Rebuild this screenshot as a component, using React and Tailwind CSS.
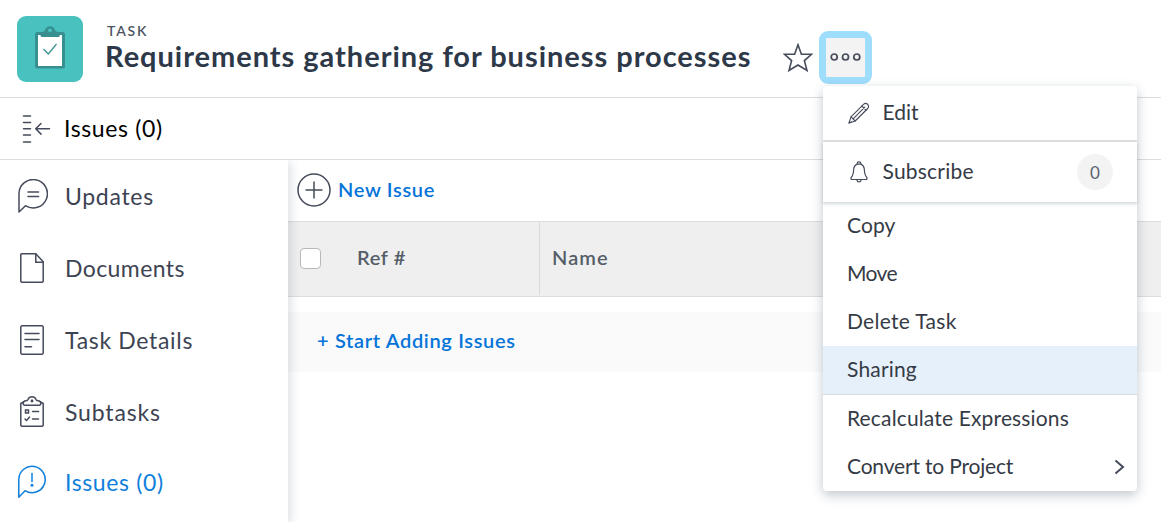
const ink = "#454b5a";

function Icon({ w, h, className = "", children, stroke = ink, sw = 1.5 }) {
  return (
    <svg
      width={w}
      height={h}
      viewBox={`0 0 ${w} ${h}`}
      fill="none"
      stroke={stroke}
      strokeWidth={sw}
      strokeLinecap="round"
      strokeLinejoin="round"
      className={"shrink-0 " + className}
    >
      {children}
    </svg>
  );
}

const TaskBadge = () => (
  <div className="mt-4 flex h-[66px] w-[66px] shrink-0 items-center justify-center rounded-[9px] bg-[#48c1bf]">
    <svg width="66" height="66" viewBox="0 0 66 66" fill="none">
      <rect x="18" y="16" width="30" height="36.500" rx="2.5" fill="#378f8f" />
      <rect x="21" y="19" width="24" height="31" fill="#fff" />
      <path d="M23.500 17.500C24 15.500 26.500 15.800 27.600 15C28.500 8.700 37.500 8.700 38.400 15C39.500 15.800 42 15.500 42.800 17.500V19.500Q42.800 21 41 21H25.500Q23.500 21 23.500 19.500Z" fill="#378f8f" />
      <circle cx="33" cy="14.300" r="1.900" fill="#48c1bf" />
      <path d="M26.500 33L31.300 38L39.500 28" stroke="#378f8f" strokeWidth="1.200" />
    </svg>
  </div>
);

const UpdatesIcon = () => (
  <Icon w={30} h={34}>
    <path d="M1 33V15A14.200 14.200 0 1 1 7.500 26.700Z" />
    <path d="M10 13H20.500M10 17.500H20.500" />
  </Icon>
);
const DocumentIcon = () => (
  <Icon w={24} h={30}>
    <path d="M1.500 .8H15.800L23.200 8.800V28Q23.200 29.200 22 29.200H2Q.8 29.200 .8 28V1.500Q.8 .8 1.500 .8Z" />
    <path d="M15.800 1V9.300H23" strokeLinejoin="miter" />
  </Icon>
);
const DetailsIcon = () => (
  <Icon w={24} h={30}>
    <rect x=".8" y=".8" width="22.400" height="28.400" rx="1.500" />
    <path d="M5 8.500H19M5 14.500H19M5 21.700H11.500" />
  </Icon>
);
const SubtasksIcon = () => (
  <Icon w={24} h={31}>
    <path d="M3.500 5.800L.8 7.500V29Q.8 30.200 2 30.200H22Q23.200 30.200 23.200 29V7.500L20.500 5.800" />
    <path d="M3.200 7.300Q3.200 5 6 4.800Q7.500 4.700 8 3.500Q9 .8 12 .8T16 3.500Q16.500 4.700 18 4.800Q20.800 5 20.800 7.300Q20.800 9.300 19 9.300H5Q3.200 9.300 3.200 7.300Z" />
    <circle cx="12" cy="5" r=".7" fill={ink} />
    <rect x="5.500" y="14" width="3" height="3" strokeLinejoin="miter" />
    <path d="M12.500 15.500H18.500M12.500 23H18.500M5 23L6.500 24.500L9.500 21" />
  </Icon>
);
const IssuesIcon = () => (
  <Icon w={30} h={34} stroke="#0f7fdb">
    <path d="M.8 32.200V14.300A13.200 13.200 0 1 1 7 25.700Z" />
    <path d="M14 8.500V16.500" />
    <circle cx="14" cy="20.300" r=".8" fill="#0f7fdb" />
  </Icon>
);

const nav = [
  { label: "Updates", icon: UpdatesIcon, tone: "h-[72px] tracking-[0.7px] text-[#3d4352]" },
  { label: "Documents", icon: DocumentIcon, tone: "h-[72px] tracking-[0.42px] text-[#3d4352]" },
  { label: "Task Details", icon: DetailsIcon, tone: "h-[72px] tracking-[0.68px] text-[#3d4352]" },
  { label: "Subtasks", icon: SubtasksIcon, tone: "h-[72px] tracking-[0.85px] text-[#3d4352]" },
  { label: "Issues (0)", icon: IssuesIcon, tone: "h-[68px] tracking-[0.62px] text-[#0f7fdb]" },
];

const Sidebar = () => (
  <nav className="relative z-10 w-[288px] shrink-0 bg-white shadow-[3px_2px_9px_rgba(70,90,110,0.18)]">
    {nav.map(({ label, icon: Glyph, tone }) => (
      <a key={label} className={"flex items-center text-[23px] leading-none " + tone}>
        <span className="ml-[18px] flex w-[47px] shrink-0 items-center">
          <span className={label === "Updates" || label === "Issues (0)" ? "" : "mb-px ml-0.5"}>
            <Glyph />
          </span>
        </span>
        {label}
      </a>
    ))}
  </nav>
);

const MenuItem = ({ label, className, children }) => (
  <div className={"flex h-12 items-center justify-between pr-3 pl-6 " + className}>
    <span className="mb-[3px]">{label}</span>
    {children}
  </div>
);

const Menu = () => (
  <div className="absolute top-12 -left-[3px] z-20 w-[314px] rounded-[4px] bg-white text-[21px] leading-none text-[#353b46] shadow-[0_4px_12px_rgba(60,80,100,0.32)]">
    <div className="flex h-14 items-center border-b-2 border-[#dedede] pl-[25px] tracking-[0px]">
      <Icon w={22} h={22} sw={1.1} className="mr-[12.5px]">
        <path d="M1 21L3 14.800L15.500 2.300Q17.500 .5 19.700 2.300Q21.500 4.500 19.700 6.500L7.200 19Z" />
        <path d="M3 14.800L7.200 19M5.100 16.900L16.800 5.200M13.800 4L18 8.200M1 21L3.500 20" />
      </Icon>
      <span className="mb-[3px]">Edit</span>
    </div>
    <div className="flex h-[60px] items-center pr-6 pl-[26.5px] tracking-[0.22px] shadow-[0_2px_3px_rgba(60,80,100,0.22)]">
      <Icon w={18} h={22} sw={1.2} className="mr-[15px]">
        <path d="M7.200 3V2.200Q7.200 .8 9 .8T10.800 2.200V3" />
        <path d="M7 3.200Q4 4.500 3.700 8Q3.500 14 1.200 16.500Q.5 18.500 2 18.500H16Q17.500 18.500 16.800 16.500Q14.500 14 14.300 8Q14 4.500 11 3.200Z" />
        <path d="M6.700 18.700Q7.200 21 9 21T11.300 18.700" />
      </Icon>
      <span className="mb-[3px] grow">Subscribe</span>
      <span className="flex h-9 w-9 items-center justify-center rounded-full bg-[#f3f3f3] text-[17px] tracking-normal text-[#5b626e]">
        0
      </span>
    </div>
    <MenuItem label="Copy" className="tracking-[0.1px]" />
    <MenuItem label="Move" className="tracking-[-0.6px]" />
    <MenuItem label="Delete Task" className="tracking-[0.3px]" />
    <MenuItem label="Sharing" className="bg-[#e6f0fb] tracking-[0.18px]" />
    <MenuItem label="Recalculate Expressions" className="box-content border-t border-[#d9dde2] tracking-[0.15px]" />
    <MenuItem label="Convert to Project" className="tracking-[-0.18px]">
      <Icon w={12} h={16} sw={2}>
        <path d="M2.500 1.500L10 8L2.500 14.500" strokeLinecap="butt" strokeLinejoin="miter" />
      </Icon>
    </MenuItem>
  </div>
);

const Header = () => (
  <header className="flex h-[98px] border-b border-[#dcdddf] pl-[17px]">
    <TaskBadge />
    <div className="ml-[22px] w-[678px] shrink-0 pt-[22px] whitespace-nowrap">
      <div className="pl-0.5 text-[14px] leading-[18px] font-semibold tracking-[1.8px] text-[#4c5462]">TASK</div>
      <h1 className="text-[29px] leading-[32px] font-bold tracking-[0.97px] text-[#2d3848]">
        Requirements gathering for business processes
      </h1>
    </div>
    <Icon w={30} h={29} sw={1.600} className="mt-[43px]">
      <path strokeLinejoin="miter" d="M15 1.800L18.400 11.300H28.500L21.400 17.600L24 27.500L15 22L6 27.500L8.600 17.600L1.500 11.300H11.600Z" />
    </Icon>
    <div className="relative mt-[31px] ml-1.5 h-[53px] w-[53px]">
      <button className="flex h-[53px] w-[53px] items-center justify-center rounded-[9px] bg-[#9fddfd]">
        <span className="flex h-[39px] w-[39px] items-center justify-center rounded-[1px] bg-[#f3f3f3]">
          <Icon w={31} h={10} sw={1.700} className="mb-px">
            <circle cx="4.200" cy="5" r="3" />
            <circle cx="15.500" cy="5" r="3" />
            <circle cx="26.800" cy="5" r="3" />
          </Icon>
        </span>
      </button>
      <div className="absolute top-[7px] left-[7px]">
        <Menu />
      </div>
    </div>
  </header>
);

const TitleBar = () => (
  <div className="flex h-[62px] items-center border-b border-[#dcdddf] pl-[22px] text-[23px] leading-none tracking-[0.62px] text-black">
    <Icon w={29} h={30} className="mr-[13px]">
      <path d="M1.500 2H8.500M1.500 8.500H8.500M1.500 14.800H8.500M1.500 21H8.500M1.500 28H8.500" />
      <path d="M27.500 14.800H14M19 9.500L13.700 14.800L19 20.100" />
    </Icon>
    Issues (0)
  </div>
);

const Issues = () => (
  <main className="grow text-[20px] leading-none font-semibold">
    <div className="flex h-[61px] items-center pb-[3px] pl-[9px] tracking-[0.7px] text-[#0574d9]">
      <Icon w={34} h={34} className="mt-px mr-[7px]">
        <circle cx="17" cy="17" r="16" />
        <path d="M17 8.500V25.500M8.500 17H25.500" strokeLinecap="butt" />
      </Icon>
      New Issue
    </div>
    <div className="flex h-[76px] border-y border-[#dcdddf] bg-[#efefef] pb-px text-[#555e68]">
      <div className="flex w-[252px] items-center border-r border-[#d9dadc] pb-px pl-3 tracking-[0.65px]">
        <span className="mr-9 h-[21px] w-[21px] rounded-[4px] border border-[#b9b9b9] bg-white" />
        <span className="pb-[3px]">Ref #</span>
      </div>
      <div className="flex items-center pb-1 pl-3 tracking-[1.1px]">Name</div>
    </div>
    <div className="mt-[15px] flex h-[60px] items-center bg-[#fafafa] pb-[5px] pl-[29px] tracking-[0.67px] text-[#0574d9]">
      + Start Adding Issues
    </div>
  </main>
);

export default function App() {
  return (
    <div className="flex h-[522px] w-[1161px] flex-col overflow-hidden bg-white font-[Lato,sans-serif]">
      <Header />
      <TitleBar />
      <div className="flex grow overflow-hidden">
        <Sidebar />
        <Issues />
      </div>
    </div>
  );
}
